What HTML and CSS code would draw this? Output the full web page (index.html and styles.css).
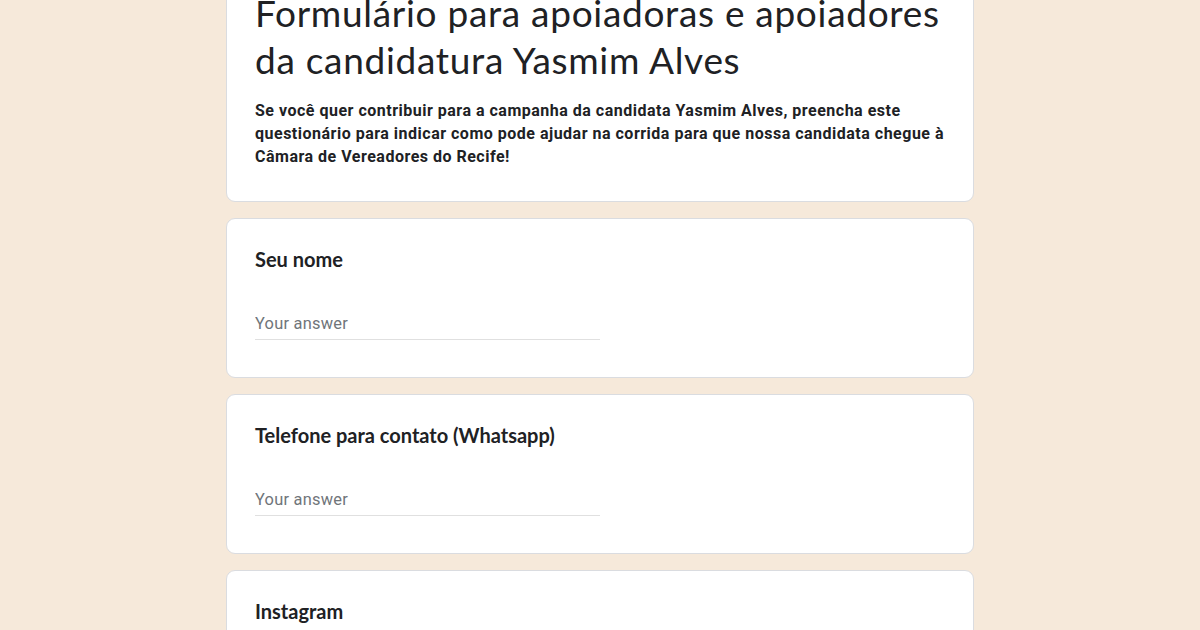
FILE: index.html
```html
<!DOCTYPE html>
<html lang="pt-BR">
<head>
    <meta charset="UTF-8">
    <meta name="viewport" content="width=device-width, initial-scale=1.0">
    <title>Formulário para apoiadoras e apoiadores da candidatura Yasmim Alves</title>
    <link rel="stylesheet" href="styles.css">
</head>
<body>

<div class="form-wrap">
    <div class="card header-card">
        <h1>Formulário para apoiadoras e apoiadores da candidatura Yasmim Alves</h1>
        <p class="description">Se você quer contribuir para a campanha da candidata Yasmim Alves, preencha este questionário para indicar como pode ajudar na corrida para que nossa candidata chegue à Câmara de Vereadores do Recife!</p>
    </div>

    <div class="card question">
        <div class="question-title">Seu nome</div>
        <input class="answer" type="text" placeholder="Your answer">
    </div>

    <div class="card question">
        <div class="question-title">Telefone para contato (Whatsapp)</div>
        <input class="answer" type="text" placeholder="Your answer">
    </div>

    <div class="card question">
        <div class="question-title">Instagram</div>
        <input class="answer" type="text" placeholder="Your answer">
    </div>
</div>

</body>
</html>
```

FILE: styles.css
```css
body {
    margin: 0;
    padding: 0;
    background-color: #f6e9da;
    font-family: 'Roboto', 'Liberation Sans', sans-serif;
    color: #202124;
}
.form-wrap {
    width: 748px;
    margin: -22px auto 0;
    display: flex;
    flex-direction: column;
    gap: 16px;
}
.card {
    background: #ffffff;
    border: 1px solid #dadce0;
    border-radius: 9px;
    padding: 28px 28px 37px;
}
.header-card {
    padding-top: 10px;
    padding-bottom: 33px;
}
h1 {
    font-family: 'Lato', 'Open Sans', sans-serif;
    font-weight: 400;
    font-size: 37px;
    line-height: 47px;
    letter-spacing: 0.7px;
    margin: 0 0 16px;
    color: #202124;
}
.description {
    margin: 0;
    font-size: 16px;
    font-weight: 700;
    line-height: 23px;
    letter-spacing: 0.5px;
}
.question-title {
    font-family: 'Lato', 'Open Sans', sans-serif;
    font-size: 20px;
    font-weight: 700;
    line-height: 25px;
}
.answer {
    display: block;
    width: 345px;
    height: 32px;
    margin-top: 35px;
    padding: 0;
    border: none;
    border-bottom: 1px solid #e0e0e0;
    font-family: 'Roboto', sans-serif;
    font-size: 16.4px;
    letter-spacing: 0.25px;
    color: #202124;
    outline: none;
    background: transparent;
}
.answer::placeholder {
    color: #70757a;
}
```
